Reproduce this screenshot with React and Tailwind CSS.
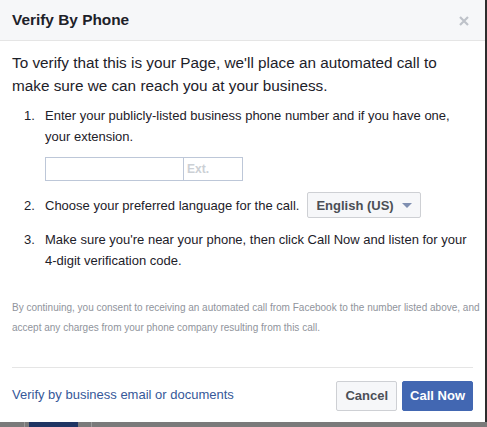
import React from "react";

const font = { fontFamily: '"Liberation Sans", Arial, sans-serif' };

const App = () => {
  return (
    <div className="w-[487px] h-[427px] flex flex-col bg-[#7a7a7a] overflow-hidden" style={font}>
      {/* dialog row */}
      <div className="flex h-[422px]">
        <div className="w-[485px] h-full bg-white flex flex-col">
          {/* Header */}
          <div className="h-[41px] flex items-center justify-between pl-3 pr-[16px] bg-[#f6f7f9] border-b border-[#e5e5e5]">
            <h2 className="text-[15.4px] font-bold text-[#1d2129]">Verify By Phone</h2>
            <svg width="10" height="10" viewBox="0 0 10 10" className="mt-[1px]">
              <path d="M1 1l8 8M9 1l-8 8" stroke="#bec2c9" strokeWidth="2.2" />
            </svg>
          </div>

          {/* Body */}
          <div className="px-3 pt-[10px] text-[#1d2129] flex-1">
            <p className="text-[15.3px] leading-[23px]">
              To verify that this is your Page, we'll place an automated call to make sure we can reach you at your business.
            </p>

            <ol className="mt-[8px] text-[13px] leading-[21px] -mr-[4px]">
              <li className="flex">
                <span className="w-[33px] pl-[12px] shrink-0">1.</span>
                <div>
                  <p>Enter your publicly-listed business phone number and if you have one, your extension.</p>
                  <div className="flex mt-[10px]">
                    <input className="w-[139px] h-[24px] border border-[#bdc7d8] outline-none" />
                    <input
                      placeholder="Ext."
                      className="w-[59px] h-[24px] border border-[#bdc7d8] border-l-0 pl-[3px] text-[12px] font-bold placeholder:text-[#ccd0d5] outline-none"
                    />
                  </div>
                </div>
              </li>
              <li className="flex items-center mt-[11px]">
                <span className="w-[33px] pl-[12px] shrink-0">2.</span>
                <span>Choose your preferred language for the call.</span>
                <button className="ml-[8px] h-[26px] pl-[8px] pr-[8px] flex items-center gap-[8px] bg-[#f6f7f9] border border-[#ced0d4] rounded-[2px] text-[13px] font-bold text-[#4b4f56]">
                  English (US)
                  <svg width="10" height="5" viewBox="0 0 10 5">
                    <path d="M0 0h10L5 5z" fill="#7f8fb1" />
                  </svg>
                </button>
              </li>
              <li className="flex mt-[11px]">
                <span className="w-[33px] pl-[12px] shrink-0">3.</span>
                <p>Make sure you're near your phone, then click Call Now and listen for your 4-digit verification code.</p>
              </li>
            </ol>

            <p className="mt-[27px] text-[10px] leading-[20px] text-[#90949c] -mr-[10px]">
              By continuing, you consent to receiving an automated call from Facebook to the number listed above, and accept any charges from your phone company resulting from this call.
            </p>
          </div>

          {/* Footer */}
          <div className="mx-3 border-t border-[#e5e5e5] h-[55px] flex items-center justify-between">
            <a className="text-[13px] text-[#365899]">Verify by business email or documents</a>
            <div className="flex gap-[5px] mt-[2px]">
              <button className="h-[30px] px-[8px] bg-[#f6f7f9] border border-[#ced0d4] rounded-[2px] text-[13px] font-bold text-[#4b4f56]">
                Cancel
              </button>
              <button className="h-[30px] px-[7px] bg-[#4267b2] border border-[#4267b2] rounded-[2px] text-[13px] font-bold text-white">
                Call Now
              </button>
            </div>
          </div>
        </div>
        <div className="flex-1 bg-[#2d2d2d]" />
      </div>

      {/* page behind */}
      <div className="flex-1 flex">
        <div className="w-[25px] border-r border-[#9a9a9a]" />
        <div className="w-[49px] ml-[4px] bg-[#1f3563]" />
        <div className="w-[14px] border-r border-[#9a9a9a]" />
      </div>
    </div>
  );
};

export default App;
